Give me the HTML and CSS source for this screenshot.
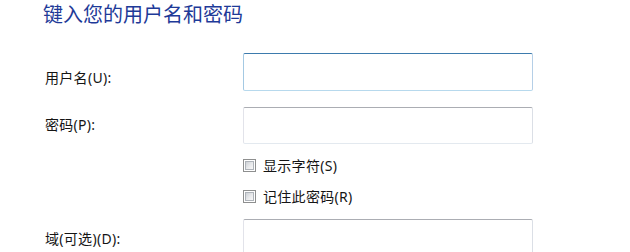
FILE: index.html
```html
<!DOCTYPE html>
<html lang="zh-CN">
<head>
<meta charset="utf-8">
<title>键入您的用户名和密码</title>
<link rel="stylesheet" href="styles.css">
</head>
<body>
<div class="dialog">
  <h1 class="title">键入您的用户名和密码</h1>
  <div class="row row-user">
    <label class="label label-user" for="user">用户名(U):</label>
    <input class="field field-focus" id="user" type="text">
  </div>
  <div class="row row-pass">
    <label class="label label-pass" for="pass">密码(P):</label>
    <input class="field field-pass" id="pass" type="password">
  </div>
  <div class="check-row check-first">
    <span class="check"></span>
    <span class="check-text">显示字符(S)</span>
  </div>
  <div class="check-row check-second">
    <span class="check"></span>
    <span class="check-text">记住此密码(R)</span>
  </div>
  <div class="row row-domain">
    <label class="label label-domain" for="domain">域(可选)(D):</label>
    <input class="field field-domain" id="domain" type="text">
  </div>
</div>
</body>
</html>
```

FILE: styles.css
```css
html, body {
  margin: 0;
  padding: 0;
  background: #ffffff;
  overflow: hidden;
}

.dialog {
  width: 630px;
  height: 252px;
  font-family: "Noto Sans", "Noto Sans CJK SC", sans-serif;
  color: #151515;
  font-size: 14px;
  line-height: 16px;
  letter-spacing: 0.3px;
}

.title {
  margin: 0;
  padding: 0 0 0 43px;
  font-family: "Noto Sans CJK SC", "Noto Sans", sans-serif;
  font-size: 20px;
  line-height: 27px;
  letter-spacing: 0;
  font-weight: normal;
  color: #1e3a98;
}

.row {
  display: flex;
  align-items: flex-start;
}

.row-user { margin-top: 26px; }
.row-pass { margin-top: 16px; }
.row-domain { margin-top: 15px; }

.label {
  width: 198px;
  padding-left: 45px;
  flex: none;
  white-space: nowrap;
}

.label-user { padding-top: 17px; }
.label-pass { padding-top: 10px; }
.label-domain { padding-top: 12px; }

.field {
  box-sizing: border-box;
  width: 290px;
  height: 37px;
  margin: 0;
  padding: 0 4px;
  border: 1px solid;
  border-color: #abadb3 #dbdfe6 #e3e9ef #e2e3ea;
  border-radius: 2px;
  background: #ffffff;
  outline: none;
  font: inherit;
}

.field-focus {
  height: 38px;
  border-color: #3d7bad #b5cfe7 #b7d9ed #a4c9e3;
}

.field-domain {
  height: 38px;
}

.check-row {
  display: flex;
  align-items: flex-start;
  padding-left: 243px;
  height: 16px;
}

.check-first { margin-top: 13px; }
.check-second { margin-top: 15px; }

.check {
  box-sizing: border-box;
  width: 13px;
  height: 13px;
  margin-top: 2px;
  border: 1px solid #8e8f8f;
  background: #ffffff;
  padding: 1px;
  flex: none;
}

.check::before {
  content: "";
  display: block;
  box-sizing: border-box;
  width: 9px;
  height: 9px;
  border: 1px solid #aeb3b9;
  background: linear-gradient(135deg, #cdd1d6 0%, #e9eaec 55%, #f8f8f8 100%);
}

.check-text {
  margin-left: 7px;
  padding-top: 1px;
  white-space: nowrap;
}
```
